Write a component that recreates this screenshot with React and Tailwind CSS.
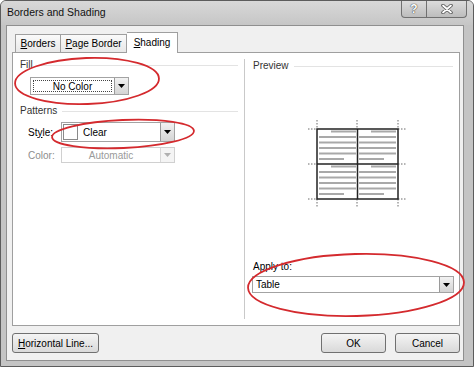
import React from "react";

function Arrow({ color = "#000" }) {
  return (
    <svg width="7" height="4" viewBox="0 0 7 4">
      <polygon points="0,0 7,0 3.5,4" fill={color} />
    </svg>
  );
}

function DropButton({ disabled }) {
  return (
    <div
      className={`w-[14px] self-stretch flex items-center justify-center border-l ${
        disabled
          ? "border-[#d8d8d8] bg-[#f4f4f4]"
          : "border-[#9a9a9a] bg-linear-to-b from-[#f2f2f2] to-[#d4d4d4]"
      }`}
    >
      <Arrow color={disabled ? "#b0b0b0" : "#000"} />
    </div>
  );
}

function GroupHeader({ label, className = "" }) {
  return (
    <div className={`flex items-center gap-[5px] h-[12px] leading-[12px] text-[#333] ${className}`}>
      <span>{label}</span>
      <div className="flex-1 h-px bg-[#e3e3e3]" />
    </div>
  );
}

function PreviewTable() {
  const lines = [];
  const cells = [
    { x: 14, y: 14.5 },
    { x: 54, y: 14.5 },
    { x: 14, y: 49.5 },
    { x: 54, y: 49.5 },
  ];
  cells.forEach((c, i) => {
    lines.push(<line key={`a${i}`} x1={c.x + 12} x2={c.x + 37} y1={c.y} y2={c.y} />);
    [1, 2, 3, 4].forEach((n) => {
      lines.push(
        <line key={`b${i}${n}`} x1={c.x} x2={c.x + 37} y1={c.y + n * 5.5} y2={c.y + n * 5.5} />
      );
    });
    lines.push(<line key={`c${i}`} x1={c.x} x2={c.x + 25} y1={c.y + 27.5} y2={c.y + 27.5} />);
  });

  return (
    <svg width="105" height="94" viewBox="0 0 105 94">
      <g stroke="#a9a9a9" strokeWidth="2">{lines}</g>
      <g stroke="#6a6a6a" strokeWidth="1" strokeDasharray="1.5 1.5">
        {[12, 52, 93].map((x) => (
          <g key={`v${x}`}>
            <line x1={x} x2={x} y1="3" y2="12" />
            <line x1={x} x2={x} y1="82" y2="91" />
          </g>
        ))}
        {[12, 47, 82].map((y) => (
          <g key={`h${y}`}>
            <line x1="3" x2="12" y1={y} y2={y} />
            <line x1="93" x2="102" y1={y} y2={y} />
          </g>
        ))}
      </g>
      <g stroke="#222" strokeWidth="1.5" fill="none">
        <rect x="12" y="12" width="81" height="70" />
        <line x1="52.5" x2="52.5" y1="12" y2="82" />
        <line x1="12" x2="93" y1="47" y2="47" />
      </g>
    </svg>
  );
}

export default function App() {
  return (
    <div className="relative w-[474px] h-[367px] border border-[#5c5c5c] rounded-t-[6px] bg-[#c4c4c4] flex flex-col font-['Liberation_Sans',Arial,sans-serif] text-[10px] text-black overflow-hidden">
      {/* title bar */}
      <div className="h-[24px] flex items-start bg-linear-to-b from-[#d8d8d8] to-[#c6c6c6] pl-[6px] pr-[6px]">
        <div className="h-full flex items-center text-[10.5px] text-[#111]">Borders and Shading</div>
        <div className="ml-auto flex">
          <div className="w-[26px] h-[17px] border border-t-0 border-[#707070] rounded-bl-[4px] bg-linear-to-b from-[#dcdcdc] to-[#bdbdbd] flex items-center justify-center">
            <span className="text-[12px] font-bold text-white [text-shadow:0_0_1px_#333,0_0_1px_#333]">?</span>
          </div>
          <div className="w-[40px] h-[17px] border border-t-0 border-l-0 border-[#707070] rounded-br-[4px] bg-linear-to-b from-[#dcdcdc] to-[#bdbdbd] flex items-center justify-center">
            <svg width="12" height="10" viewBox="0 0 12 10">
              <path d="M2 1.5 L10 8.5 M10 1.5 L2 8.5" stroke="#555" strokeWidth="3.5" strokeLinecap="round" />
              <path d="M2 1.5 L10 8.5 M10 1.5 L2 8.5" stroke="#fff" strokeWidth="1.8" strokeLinecap="round" />
            </svg>
          </div>
        </div>
      </div>

      {/* client area */}
      <div className="flex-1 flex pl-[5px] pr-[9px] pb-[5px]">
        <div className="flex-1 flex flex-col bg-[#f0f0f0] border border-[#8f8f8f] pt-[6px] pl-[5px] pr-[3px]">
          {/* tabs */}
          <div className="relative z-10 -mb-px flex items-end h-[21px] pl-[3px]">
            <div className="w-[45px] h-[19px] border border-r-0 border-[#9f9f9f] bg-linear-to-b from-[#fafafa] to-[#e8e8e8] flex items-center justify-center">
              <span><u>B</u>orders</span>
            </div>
            <div className="w-[67px] h-[19px] border border-[#9f9f9f] bg-linear-to-b from-[#fafafa] to-[#e8e8e8] flex items-center justify-center">
              <span><u>P</u>age Border</span>
            </div>
            <div className="w-[51px] h-[21px] border border-b-0 border-l-0 border-[#9f9f9f] bg-white flex items-center justify-center pb-[1px]">
              <span><u>S</u>hading</span>
            </div>
          </div>

          {/* panel */}
          <div className="h-[274px] bg-white border border-[#9f9f9f] flex">
            {/* left */}
            <div className="w-[231px] flex flex-col">
              <GroupHeader label="Fill" className="mt-[6px] pl-[7px] pr-[6px]" />
              <div className="mt-[6px] ml-[17px] w-[99px] h-[18px] border border-[#a3a3a3] flex bg-white">
                <div className="flex-1 m-[2px] border border-dotted border-[#444] flex items-center justify-center">
                  No Color
                </div>
                <DropButton />
              </div>

              <GroupHeader label="Patterns" className="mt-[10px] pl-[7px] pr-[6px]" />
              <div className="mt-[5px] flex items-center pl-[15px]">
                <span className="w-[33px]">St<u>y</u>le:</span>
                <div className="w-[114px] h-[20px] border border-[#a3a3a3] flex bg-white">
                  <div className="w-[15px] my-[1px] ml-[1px] border border-[#8a8a8a] bg-white" />
                  <div className="flex-1 flex items-center pl-[5px]">Clear</div>
                  <DropButton />
                </div>
              </div>
              <div className="mt-[5px] flex items-center pl-[15px]">
                <span className="w-[33px] text-[#8d8d8d]">Color:</span>
                <div className="w-[114px] h-[16px] border border-[#d0d0d0] flex bg-white">
                  <div className="flex-1 flex items-center justify-center text-[#9a9a9a]">Automatic</div>
                  <DropButton disabled />
                </div>
              </div>
            </div>

            <div className="w-px bg-[#c9c9c9] my-[6px]" />

            {/* right */}
            <div className="flex-1 flex flex-col pl-[7px] pr-[5px]">
              <GroupHeader label="Preview" className="mt-[7px] pl-[1px] pr-px" />
              <div className="mt-[45px] ml-[53px]">
                <PreviewTable />
              </div>
              <div className="mt-[50px] pl-[1px] h-[12px] leading-[12px]">Apply to:</div>
              <div className="mt-[3px] h-[17px] border border-[#a3a3a3] flex bg-white">
                <div className="flex-1 flex items-center pl-[3px]">Table</div>
                <DropButton />
              </div>
            </div>
          </div>

          {/* buttons */}
          <div className="mt-[7px] flex h-[20px]">
            <button className="w-[87px] h-full border border-[#707070] rounded-[3px] bg-linear-to-b from-[#f4f4f4] to-[#d9d9d9] flex items-center justify-center">
              <span><u>H</u>orizontal Line...</span>
            </button>
            <button className="ml-auto w-[65px] h-full border border-[#707070] rounded-[3px] bg-linear-to-b from-[#f4f4f4] to-[#d9d9d9] flex items-center justify-center">
              OK
            </button>
            <button className="ml-[9px] w-[65px] h-full border border-[#707070] rounded-[3px] bg-linear-to-b from-[#f4f4f4] to-[#d9d9d9] flex items-center justify-center">
              Cancel
            </button>
          </div>
        </div>
      </div>

      {/* red annotation ellipses */}
      <svg
        className="absolute left-0 top-0 pointer-events-none"
        width="474"
        height="367"
        viewBox="0 0 474 367"
      >
        <g fill="none" stroke="#d42a2e" strokeWidth="1.8">
          <ellipse cx="86" cy="80" rx="72" ry="23" transform="rotate(-2 86 80)" />
          <ellipse cx="122" cy="133" rx="71" ry="14" transform="rotate(-2.5 122 133)" />
          <ellipse cx="355" cy="284" rx="108" ry="31" transform="rotate(-1.5 355 284)" />
        </g>
      </svg>
    </div>
  );
}
